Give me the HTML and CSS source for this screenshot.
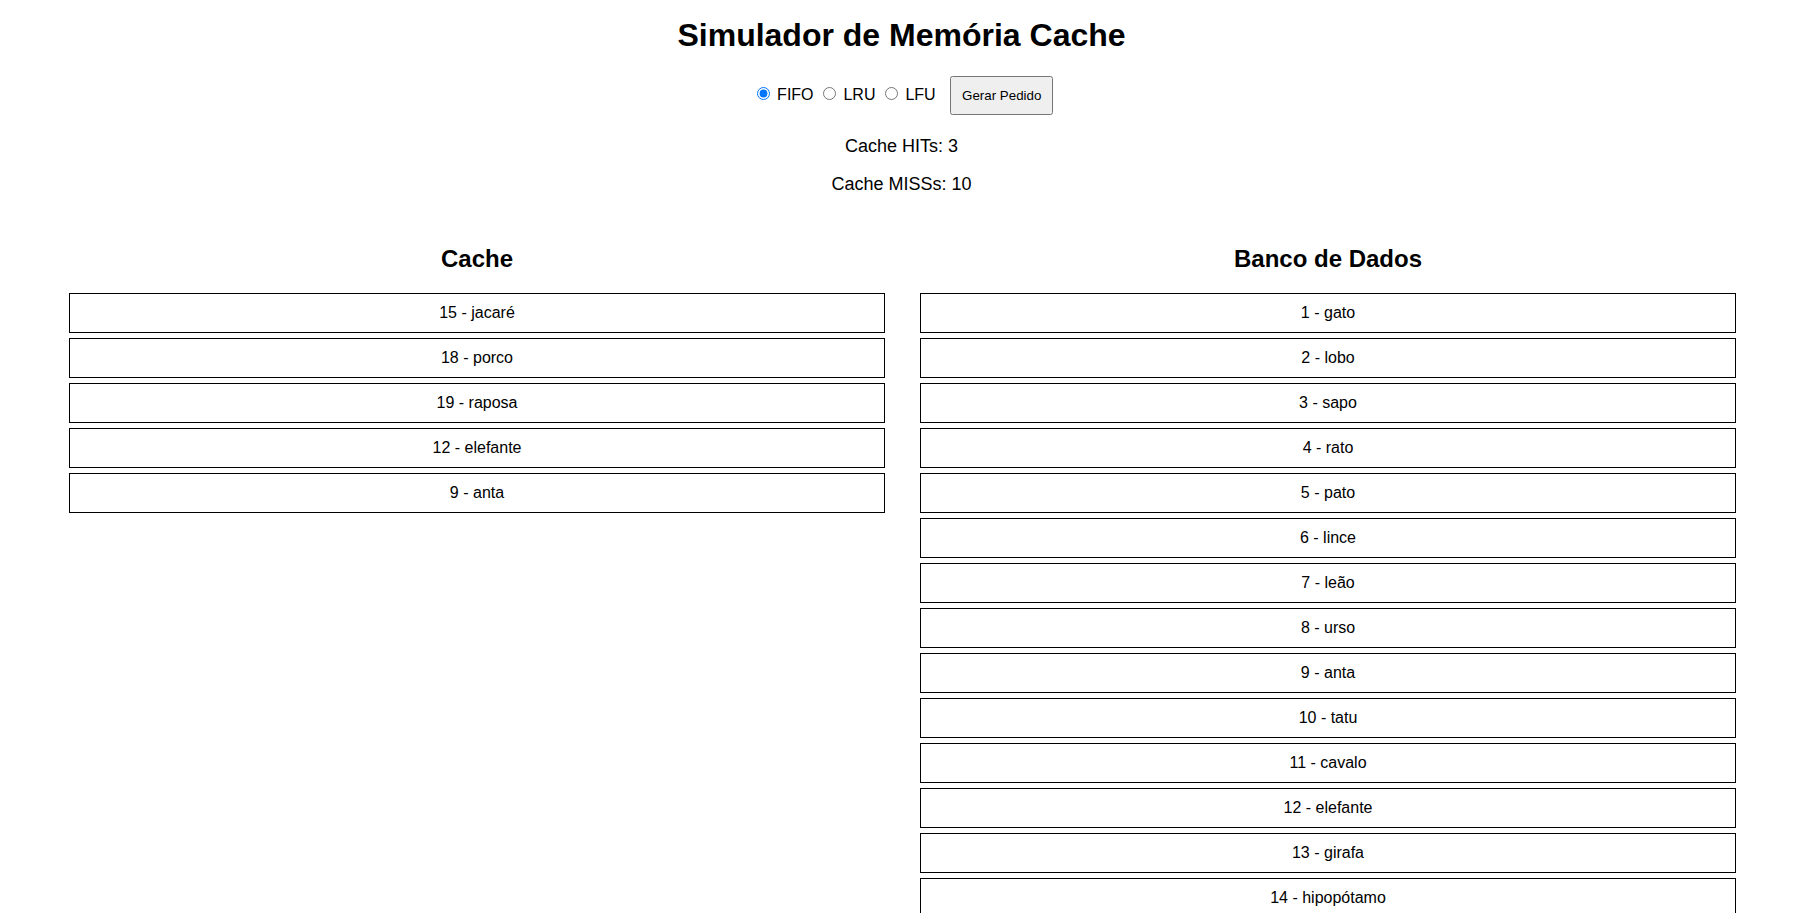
FILE: index.html
```html
<!DOCTYPE html>
<html lang="pt-BR">
<head>
<meta charset="utf-8">
<title>Simulador de Memória Cache</title>
<link rel="stylesheet" href="styles.css">
</head>
<body>
<h1 class="title">Simulador de Memória Cache</h1>
<div class="controls"><input type="radio" name="alg" id="fifo" checked> <label for="fifo">FIFO</label> <input type="radio" name="alg" id="lru"> <label for="lru">LRU</label> <input type="radio" name="alg" id="lfu"> <label for="lfu">LFU</label> <button class="btn" type="button">Gerar Pedido</button></div>
<div class="stats">
  <p class="stat">Cache HITs: 3</p>
  <p class="stat">Cache MISSs: 10</p>
</div>
<div class="columns">
  <section class="column">
    <h2 class="column-title">Cache</h2>
    <div class="list">
      <div class="item">15 - jacaré</div>
      <div class="item">18 - porco</div>
      <div class="item">19 - raposa</div>
      <div class="item">12 - elefante</div>
      <div class="item">9 - anta</div>
    </div>
  </section>
  <section class="column">
    <h2 class="column-title">Banco de Dados</h2>
    <div class="list">
      <div class="item">1 - gato</div>
      <div class="item">2 - lobo</div>
      <div class="item">3 - sapo</div>
      <div class="item">4 - rato</div>
      <div class="item">5 - pato</div>
      <div class="item">6 - lince</div>
      <div class="item">7 - leão</div>
      <div class="item">8 - urso</div>
      <div class="item">9 - anta</div>
      <div class="item">10 - tatu</div>
      <div class="item">11 - cavalo</div>
      <div class="item">12 - elefante</div>
      <div class="item">13 - girafa</div>
      <div class="item">14 - hipopótamo</div>
      <div class="item">15 - jacaré</div>
      <div class="item">16 - macaco</div>
      <div class="item">17 - onça</div>
      <div class="item">18 - porco</div>
      <div class="item">19 - raposa</div>
      <div class="item">20 - zebra</div>
    </div>
  </section>
</div>
</body>
</html>
```
FILE: styles.css
```css
html, body {
  margin: 0;
  padding: 0;
  background: #ffffff;
}

body {
  font-family: "Liberation Sans", Arial, sans-serif;
  font-size: 16px;
  color: #000000;
}

.title {
  font-size: 32px;
  line-height: 37px;
  font-weight: bold;
  text-align: center;
  margin: 17px 0 22px;
}

.controls {
  text-align: center;
  font-size: 16px;
  padding-left: 2px;
}

.btn {
  font-family: "Liberation Sans", Arial, sans-serif;
  font-size: 13.333px;
  padding: 10px;
  margin-left: 10px;
}

.stats {
  display: flex;
  flex-direction: column;
  gap: 18px;
  margin-top: 21px;
}

.stat {
  margin: 0;
  font-size: 18px;
  line-height: 20px;
  text-align: center;
}

.columns {
  display: flex;
  gap: 35px;
  padding: 0 67px 0 69px;
  margin-top: 31px;
}

.column {
  flex: 1 1 0;
  min-width: 0;
}

.column-title {
  font-size: 24px;
  line-height: 28px;
  text-align: center;
  margin: 20px 0;
}

.list {
  display: flex;
  flex-direction: column;
  gap: 5px;
}

.item {
  border: 1px solid #000000;
  padding: 10px;
  line-height: 18px;
  text-align: center;
}
```
